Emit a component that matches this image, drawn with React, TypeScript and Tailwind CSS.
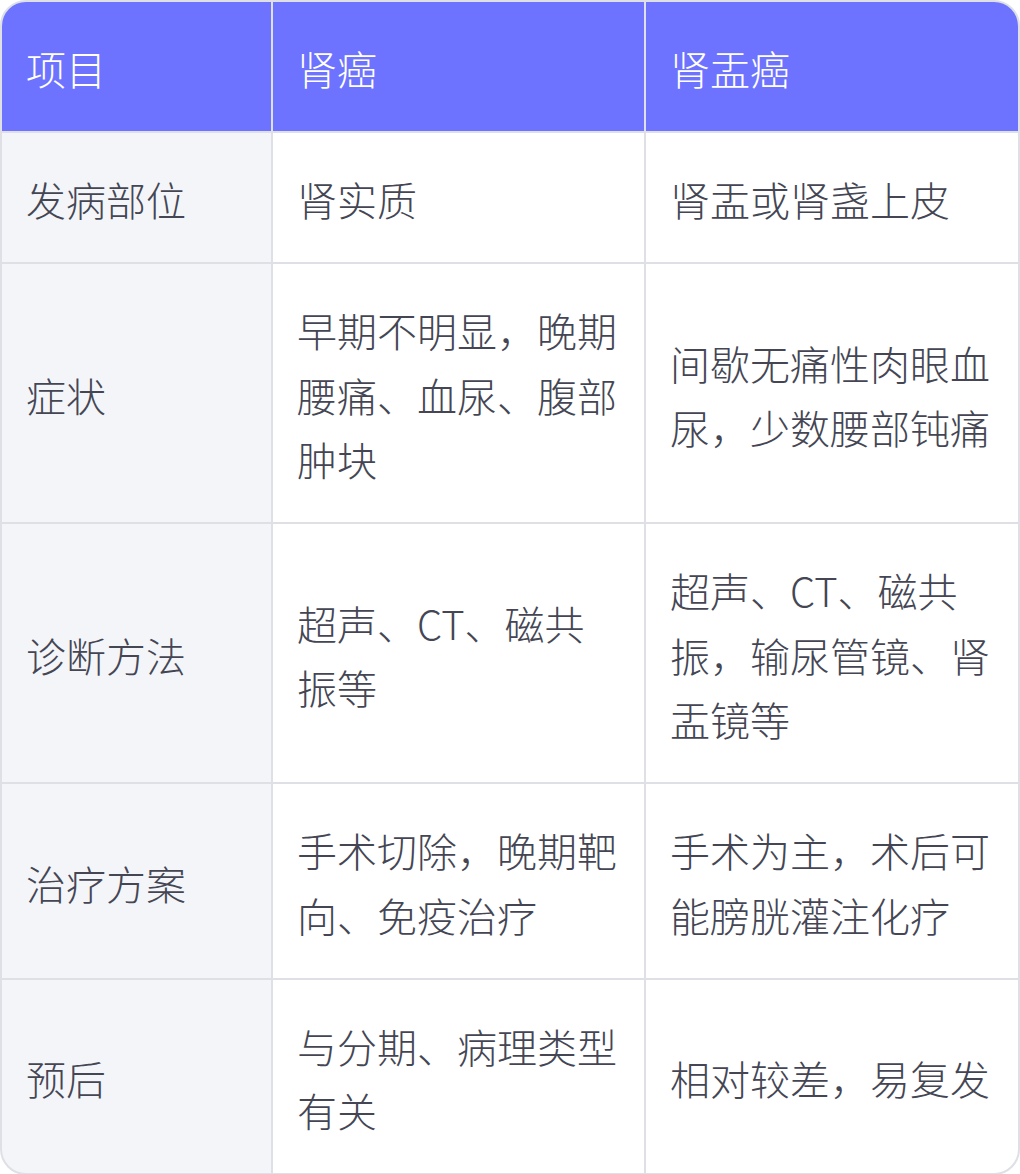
import React from "react";

const rows: [string, string, string][] = [
  ["发病部位", "肾实质", "肾盂或肾盏上皮"],
  ["症状", "早期不明显，晚期腰痛、血尿、腹部肿块", "间歇无痛性肉眼血尿，少数腰部钝痛"],
  ["诊断方法", "超声、CT、磁共振等", "超声、CT、磁共振，输尿管镜、肾盂镜等"],
  ["治疗方案", "手术切除，晚期靶向、免疫治疗", "手术为主，术后可能膀胱灌注化疗"],
  ["预后", "与分期、病理类型有关", "相对较差，易复发"],
];

const cell = "px-6 pt-[34.25px] pb-[30.25px] leading-[64.5px] flex items-center";

export default function App() {
  return (
    <div
      className="w-[1020px] bg-white"
      style={{ fontFamily: '"Noto Sans CJK SC", "Noto Sans", sans-serif' }}
    >
      <div className="w-[1020px] rounded-[26px] border-2 border-[#dfe0e5] overflow-hidden bg-[#dfe0e5] grid grid-cols-[269px_371px_372px] gap-[2px] text-[40px] font-light">
        <div className={`${cell} bg-[#6d73ff] text-white`}>项目</div>
        <div className={`${cell} bg-[#6d73ff] text-white`}>肾癌</div>
        <div className={`${cell} bg-[#6d73ff] text-white`}>肾盂癌</div>
        {rows.map((r, i) => (
          <React.Fragment key={i}>
            <div className={`${cell} bg-[#f4f5f9] text-[#444654]`}>{r[0]}</div>
            <div className={`${cell} bg-white text-[#444654]`}>{r[1]}</div>
            <div className={`${cell} bg-white text-[#444654]`}>{r[2]}</div>
          </React.Fragment>
        ))}
      </div>
    </div>
  );
}
